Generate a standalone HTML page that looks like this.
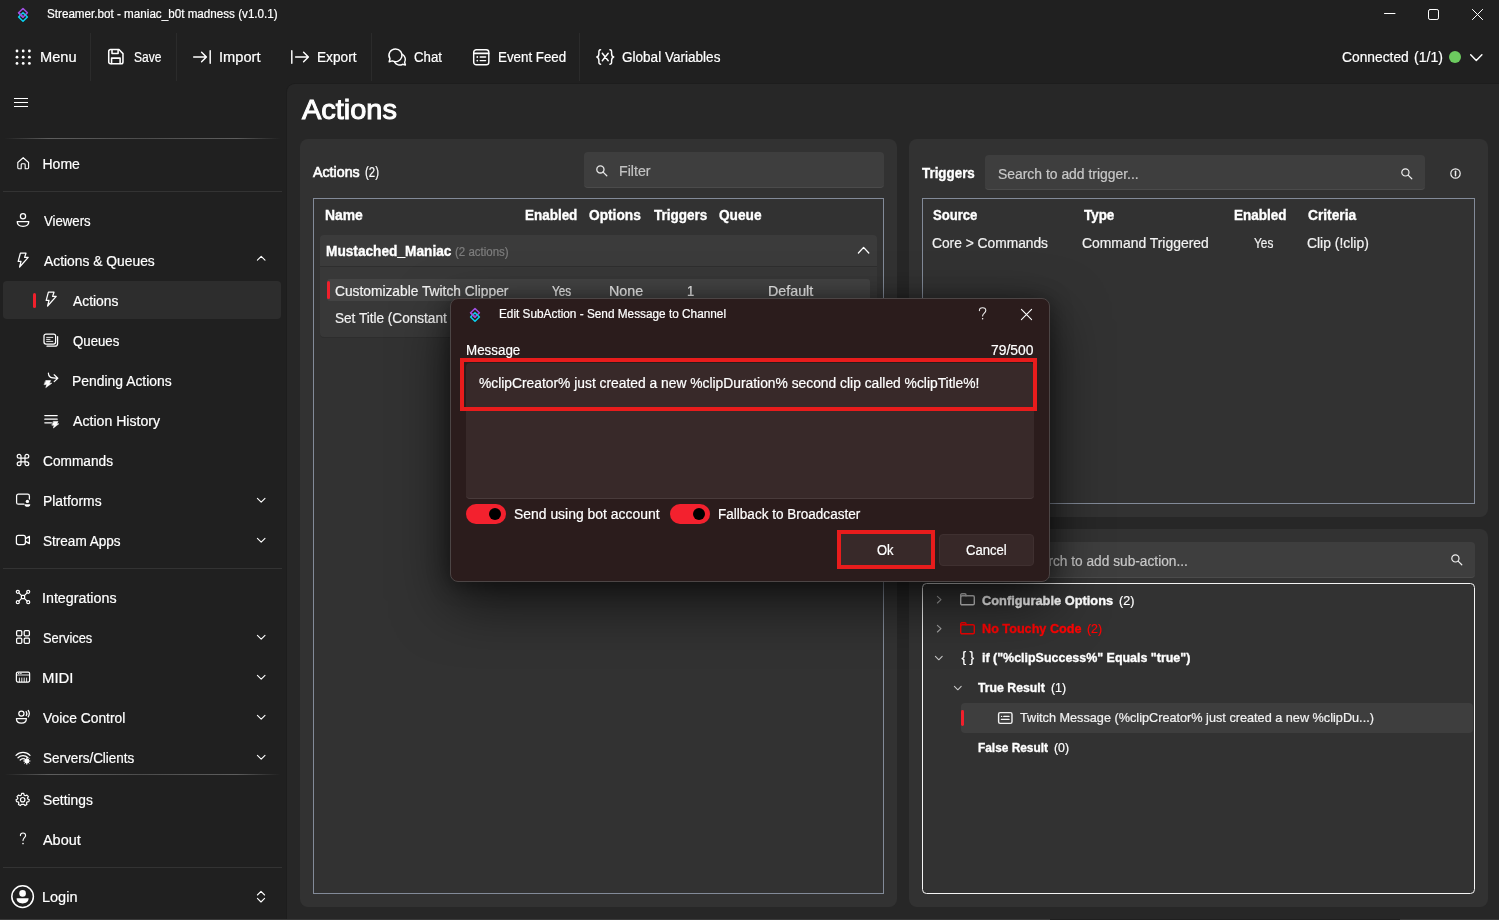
<!DOCTYPE html>
<html lang="en"><head><meta charset="utf-8"><title>Streamer.bot - Actions</title>
<style>
html,body{margin:0;padding:0;}
body{width:1499px;height:920px;overflow:hidden;background:#202020;position:relative;font-family:"Liberation Sans", sans-serif;}
#app{position:absolute;left:0;top:0;width:1499px;height:920px;will-change:transform;}
.b{position:absolute;box-sizing:border-box;}
.t{position:absolute;white-space:pre;font-family:"Liberation Sans", sans-serif;transform-origin:0 0;}
.i{position:absolute;overflow:visible;}
</style></head>
<body>
<div id="app">
<div class="b" style="left:287px;top:83.7px;width:1212px;height:835.3px;background:#272727;border-radius:8px 0 0 0;box-shadow:0 0 0 1px #1d1d1d;"></div>
<div class="b" style="left:0px;top:919px;width:1050px;height:1px;background:#3a3a3a;"></div>
<div class="b" style="left:1050px;top:919px;width:350px;height:1px;background:#1f1f1f;"></div>
<div class="b" style="left:1400px;top:919px;width:99px;height:1px;background:#3a3a3a;"></div>
<svg class="i" style="left:15px;top:7px;" width="16" height="16" viewBox="0 0 16 16" fill="none" stroke="#fff" stroke-width="1.5" stroke-linecap="round" stroke-linejoin="round"><path d="M8 1.5 L12.4 5.8 L8 10.1 L3.6 5.8 Z" stroke="#9d4fdc" stroke-width="1.55"/><path d="M8 5.8 L12.4 10 L8 14.3 L3.6 10 Z" stroke="#0ad0ee" stroke-width="1.55"/><path d="M3.6 5.8 L8 10.1" stroke="#9d4fdc" stroke-width="1.55"/></svg>
<span class="t" style="left:47.0px;top:4.14px;font-size:12px;line-height:20px;color:#fff;transform:scaleX(0.9716);-webkit-text-stroke:0.2px #fff;">Streamer.bot - maniac_b0t madness (v1.0.1)</span>
<svg class="i" style="left:1384px;top:8px;" width="12" height="12" viewBox="0 0 12 12" fill="none" stroke="#fff" stroke-width="1" stroke-linecap="round" stroke-linejoin="round"><path d="M0.5 5.5 H11"/></svg>
<svg class="i" style="left:1428px;top:9px;" width="11" height="11" viewBox="0 0 11 11" fill="none" stroke="#fff" stroke-width="1" stroke-linecap="round" stroke-linejoin="round"><rect x="0.5" y="0.5" width="10" height="10" rx="1.6"/></svg>
<svg class="i" style="left:1472px;top:9px;" width="11" height="11" viewBox="0 0 11 11" fill="none" stroke="#fff" stroke-width="1" stroke-linecap="round" stroke-linejoin="round"><path d="M0.4 0.4 L10.6 10.6 M10.6 0.4 L0.4 10.6"/></svg>
<div class="b" style="left:90px;top:33px;width:1px;height:48px;background:#2b2b2b;"></div>
<div class="b" style="left:176.3px;top:33px;width:1.0px;height:48px;background:#2b2b2b;"></div>
<div class="b" style="left:371px;top:33px;width:1px;height:48px;background:#2b2b2b;"></div>
<div class="b" style="left:579px;top:33px;width:1px;height:48px;background:#2b2b2b;"></div>
<svg class="i" style="left:14.6px;top:48.8px;" width="16.4" height="16.4" viewBox="0 0 16.4 16.4" fill="none" stroke="#fff" stroke-width="1.1" stroke-linecap="round" stroke-linejoin="round"><circle cx="2.0" cy="2.0" r="1.4" fill="#fff" stroke="none"/><circle cx="2.0" cy="8.2" r="1.4" fill="#fff" stroke="none"/><circle cx="2.0" cy="14.4" r="1.4" fill="#fff" stroke="none"/><circle cx="8.2" cy="2.0" r="1.4" fill="#fff" stroke="none"/><circle cx="8.2" cy="8.2" r="1.4" fill="#fff" stroke="none"/><circle cx="8.2" cy="14.4" r="1.4" fill="#fff" stroke="none"/><circle cx="14.4" cy="2.0" r="1.4" fill="#fff" stroke="none"/><circle cx="14.4" cy="8.2" r="1.4" fill="#fff" stroke="none"/><circle cx="14.4" cy="14.4" r="1.4" fill="#fff" stroke="none"/></svg>
<span class="t" style="left:39.56px;top:47.35px;font-size:14px;line-height:20px;color:#fff;transform:scaleX(1.0441);-webkit-text-stroke:0.2px #fff;">Menu</span>
<svg class="i" style="left:107.2px;top:48.3px;" width="17.7" height="17.4" viewBox="0 0 16.5 16.5" fill="none" stroke="#fff" stroke-width="1.45" stroke-linecap="round" stroke-linejoin="round"><path d="M3.2 1.5 H11.2 L15 5.3 V13.3 A1.7 1.7 0 0 1 13.3 15 H3.2 A1.7 1.7 0 0 1 1.5 13.3 V3.2 A1.7 1.7 0 0 1 3.2 1.5 Z"/><path d="M4.6 1.7 V5.2 H10.4 V1.7"/><path d="M4.2 14.8 V9.6 H12.3 V14.8"/></svg>
<span class="t" style="left:133.6px;top:47.35px;font-size:14px;line-height:20px;color:#fff;transform:scaleX(0.8592);-webkit-text-stroke:0.2px #fff;">Save</span>
<svg class="i" style="left:193px;top:50px;" width="18" height="14" viewBox="0 0 18 14" fill="none" stroke="#fff" stroke-width="1.45" stroke-linecap="round" stroke-linejoin="round"><path d="M0.7 7 H13.2 M8.6 2.2 L13.4 7 L8.6 11.8 M17.2 0.7 V13.3"/></svg>
<span class="t" style="left:219.25px;top:47.35px;font-size:14px;line-height:20px;color:#fff;transform:scaleX(1.0468);-webkit-text-stroke:0.2px #fff;">Import</span>
<svg class="i" style="left:290.5px;top:50px;" width="18" height="14" viewBox="0 0 18 14" fill="none" stroke="#fff" stroke-width="1.45" stroke-linecap="round" stroke-linejoin="round"><path d="M0.8 0.7 V13.3 M4.6 7 H17.2 M12.6 2.2 L17.4 7 L12.6 11.8"/></svg>
<span class="t" style="left:317.22px;top:47.35px;font-size:14px;line-height:20px;color:#fff;transform:scaleX(0.9754);-webkit-text-stroke:0.2px #fff;">Export</span>
<svg class="i" style="left:387.5px;top:48px;" width="19" height="18" viewBox="0 0 19 18" fill="none" stroke="#fff" stroke-width="1.45" stroke-linecap="round" stroke-linejoin="round"><path d="M7.6 1 A6.6 6.3 0 1 1 4.4 12.9 L1.2 13.7 L2 10.7 A6.6 6.3 0 0 1 7.6 1 Z"/><path d="M14.7 6.6 A5.8 5.8 0 0 1 16.6 14.3 L17.4 17 L14.6 16.3 A5.9 5.9 0 0 1 6.6 14.2"/></svg>
<span class="t" style="left:413.9px;top:47.35px;font-size:14px;line-height:20px;color:#fff;transform:scaleX(0.9467);-webkit-text-stroke:0.2px #fff;">Chat</span>
<svg class="i" style="left:473px;top:48.8px;" width="16.5" height="16.5" viewBox="0 0 16.5 16.5" fill="none" stroke="#fff" stroke-width="1.45" stroke-linecap="round" stroke-linejoin="round"><rect x="0.7" y="0.7" width="15.1" height="15.1" rx="2.6"/><path d="M0.9 4.4 H15.6" stroke-width="1.8"/><path d="M7.2 8 H12.6 M7.2 11.6 H12.6" /><circle cx="4.3" cy="8" r="0.9" fill="#fff" stroke="none"/><circle cx="4.3" cy="11.6" r="0.9" fill="#fff" stroke="none"/></svg>
<span class="t" style="left:497.55px;top:47.35px;font-size:14px;line-height:20px;color:#fff;transform:scaleX(0.9525);-webkit-text-stroke:0.2px #fff;">Event Feed</span>
<svg class="i" style="left:595.5px;top:49px;" width="18.5" height="16" viewBox="0 0 18.5 16" fill="none" stroke="#fff" stroke-width="1.45" stroke-linecap="round" stroke-linejoin="round"><path d="M4.6 0.8 C2.6 0.8 2.9 2.6 2.9 4.4 C2.9 6.6 2.4 7.6 0.8 8 C2.4 8.4 2.9 9.4 2.9 11.6 C2.9 13.4 2.6 15.2 4.6 15.2"/><path d="M13.9 0.8 C15.9 0.8 15.6 2.6 15.6 4.4 C15.6 6.6 16.1 7.6 17.7 8 C16.1 8.4 15.6 9.4 15.6 11.6 C15.6 13.4 15.9 15.2 13.9 15.2"/><path d="M6.3 4.2 L12.2 11.8 M12.2 4.2 L6.3 11.8"/></svg>
<span class="t" style="left:622.2px;top:47.35px;font-size:14px;line-height:20px;color:#fff;transform:scaleX(0.9677);-webkit-text-stroke:0.2px #fff;">Global Variables</span>
<span class="t" style="left:1342.2px;top:46.85px;font-size:14px;line-height:20px;color:#fff;transform:scaleX(0.9861);-webkit-text-stroke:0.2px #fff;">Connected</span>
<span class="t" style="left:1414.4px;top:46.85px;font-size:14px;line-height:20px;color:#fff;transform:scaleX(1.0063);-webkit-text-stroke:0.2px #fff;">(1/1)</span>
<div class="b" style="left:1449px;top:51px;width:12px;height:12px;background:#6ccb5f;border-radius:6px;"></div>
<svg class="i" style="left:1470px;top:53.5px;" width="12.6" height="8" viewBox="0 0 12.6 8" fill="none" stroke="#fff" stroke-width="1.45" stroke-linecap="round" stroke-linejoin="round"><path d="M0.7 0.8 L6.3 6.6 L11.9 0.8"/></svg>
<svg class="i" style="left:14px;top:98px;shape-rendering:crispEdges;" width="14" height="9" viewBox="0 0 14 9" fill="none" stroke="#fff" stroke-width="1" stroke-linecap="round" stroke-linejoin="round"><path d="M0 0.5 H14 M0 4.5 H14 M0 8.5 H14"/></svg>
<div class="b" style="left:4px;top:138px;width:277px;height:1px;background:linear-gradient(90deg, rgba(96,96,96,0), #5e5e5e 16%, #4c4c4c 50%, #5e5e5e 84%, rgba(96,96,96,0));"></div>
<div class="b" style="left:3px;top:191px;width:279px;height:1px;background:#333333;"></div>
<div class="b" style="left:3px;top:568px;width:279px;height:1px;background:#333333;"></div>
<div class="b" style="left:4px;top:774px;width:277px;height:1px;background:linear-gradient(90deg, rgba(96,96,96,0), #5e5e5e 16%, #4c4c4c 50%, #5e5e5e 84%, rgba(96,96,96,0));"></div>
<div class="b" style="left:3px;top:867px;width:279px;height:1px;background:#333333;"></div>
<div class="b" style="left:3px;top:281px;width:278px;height:38px;background:#2d2d2d;border-radius:4px;"></div>
<div class="b" style="left:33px;top:292.5px;width:3px;height:15.5px;background:#f0202c;border-radius:1.5px;"></div>
<span class="t" style="left:42.5px;top:153.85px;font-size:14px;line-height:20px;color:#fff;-webkit-text-stroke:0.2px #fff;">Home</span>
<span class="t" style="left:43.5px;top:211.45px;font-size:14px;line-height:20px;color:#fff;transform:scaleX(0.9427);-webkit-text-stroke:0.2px #fff;">Viewers</span>
<span class="t" style="left:43.5px;top:251.15px;font-size:14px;line-height:20px;color:#fff;transform:scaleX(0.9887);-webkit-text-stroke:0.2px #fff;">Actions &amp; Queues</span>
<span class="t" style="left:73.3px;top:291.15px;font-size:14px;line-height:20px;color:#fff;transform:scaleX(0.9889);-webkit-text-stroke:0.2px #fff;">Actions</span>
<span class="t" style="left:73.3px;top:331.15px;font-size:14px;line-height:20px;color:#fff;transform:scaleX(0.9442);-webkit-text-stroke:0.2px #fff;">Queues</span>
<span class="t" style="left:72.31px;top:371.15px;font-size:14px;line-height:20px;color:#fff;transform:scaleX(0.9932);-webkit-text-stroke:0.2px #fff;">Pending Actions</span>
<span class="t" style="left:73.3px;top:411.15px;font-size:14px;line-height:20px;color:#fff;transform:scaleX(1.0086);-webkit-text-stroke:0.2px #fff;">Action History</span>
<span class="t" style="left:43.0px;top:451.15px;font-size:14px;line-height:20px;color:#fff;transform:scaleX(0.9779);-webkit-text-stroke:0.2px #fff;">Commands</span>
<span class="t" style="left:42.51px;top:491.15px;font-size:14px;line-height:20px;color:#fff;transform:scaleX(0.991);-webkit-text-stroke:0.2px #fff;">Platforms</span>
<span class="t" style="left:42.7px;top:531.15px;font-size:14px;line-height:20px;color:#fff;transform:scaleX(0.9688);-webkit-text-stroke:0.2px #fff;">Stream Apps</span>
<span class="t" style="left:42.48px;top:588.45px;font-size:14px;line-height:20px;color:#fff;transform:scaleX(1.0186);-webkit-text-stroke:0.2px #fff;">Integrations</span>
<span class="t" style="left:42.7px;top:628.15px;font-size:14px;line-height:20px;color:#fff;transform:scaleX(0.9184);-webkit-text-stroke:0.2px #fff;">Services</span>
<span class="t" style="left:42.14px;top:668.35px;font-size:14px;line-height:20px;color:#fff;transform:scaleX(1.0628);-webkit-text-stroke:0.2px #fff;">MIDI</span>
<span class="t" style="left:43.2px;top:708.15px;font-size:14px;line-height:20px;color:#fff;transform:scaleX(0.9885);-webkit-text-stroke:0.2px #fff;">Voice Control</span>
<span class="t" style="left:42.6px;top:748.25px;font-size:14px;line-height:20px;color:#fff;transform:scaleX(0.9619);-webkit-text-stroke:0.2px #fff;">Servers/Clients</span>
<span class="t" style="left:42.6px;top:789.75px;font-size:14px;line-height:20px;color:#fff;transform:scaleX(0.9845);-webkit-text-stroke:0.2px #fff;">Settings</span>
<span class="t" style="left:43.2px;top:830.15px;font-size:14px;line-height:20px;color:#fff;transform:scaleX(1.0301);-webkit-text-stroke:0.2px #fff;">About</span>
<span class="t" style="left:42.17px;top:886.65px;font-size:14px;line-height:20px;color:#fff;transform:scaleX(1.0348);-webkit-text-stroke:0.2px #fff;">Login</span>
<svg class="i" style="left:15.8px;top:155.6px;" width="14.4" height="14.4" viewBox="0 0 16 16" fill="none" stroke="#fff" stroke-width="1.25" stroke-linecap="round" stroke-linejoin="round"><path d="M2 7.2 L8 1.9 L14 7.2 V13.2 A1 1 0 0 1 13 14.2 H10.2 V9.6 A1 1 0 0 0 9.2 8.6 H6.8 A1 1 0 0 0 5.8 9.6 V14.2 H3 A1 1 0 0 1 2 13.2 Z"/></svg>
<svg class="i" style="left:15.0px;top:211.9px;" width="16" height="16" viewBox="0 0 16 16" fill="none" stroke="#fff" stroke-width="1.25" stroke-linecap="round" stroke-linejoin="round"><circle cx="8" cy="4.2" r="2.6"/><path d="M2.2 9.6 H13.8 C13.8 12.6 11.4 14.4 8 14.4 C4.6 14.4 2.2 12.6 2.2 9.6 Z"/></svg>
<svg class="i" style="left:15.0px;top:251.60000000000002px;" width="16" height="16" viewBox="0 0 16 16" fill="none" stroke="#fff" stroke-width="1.25" stroke-linecap="round" stroke-linejoin="round"><path d="M5.4 1.2 H11 L9.6 5.4 H13.2 L4.6 15 L6 9.4 H3.2 Z"/></svg>
<svg class="i" style="left:42.5px;top:291.3px;" width="16" height="16" viewBox="0 0 16 16" fill="none" stroke="#fff" stroke-width="1.25" stroke-linecap="round" stroke-linejoin="round"><path d="M5.4 1.2 H11 L9.6 5.4 H13.2 L4.6 15 L6 9.4 H3.2 Z"/></svg>
<svg class="i" style="left:42.5px;top:331.6px;" width="16" height="16" viewBox="0 0 16 16" fill="none" stroke="#fff" stroke-width="1.25" stroke-linecap="round" stroke-linejoin="round"><rect x="1" y="2" width="11.6" height="10" rx="2"/><path d="M14.6 4.6 V11.4 A2.8 2.8 0 0 1 11.8 14.2 H4"/><path d="M3.6 5.4 H9.8 M3.6 7.4 H7 M3.6 9.4 H9.8" stroke-width="0.9"/></svg>
<svg class="i" style="left:42.5px;top:371.6px;" width="16" height="16" viewBox="0 0 16 16" fill="none" stroke="#fff" stroke-width="1.25" stroke-linecap="round" stroke-linejoin="round"><path d="M5.4 1.2 C5.4 5 7.4 6.2 14.6 6.2 M11.2 2.8 L14.8 6.2 L11.2 9.6"/><path d="M3 8.6 H7.6 L6.4 11.2 H8.8 L2.8 15.6 L3.8 12.6 H1.4 Z" fill="#fff" stroke-width="0.6"/></svg>
<svg class="i" style="left:42.5px;top:411.6px;" width="16" height="16" viewBox="0 0 16 16" fill="none" stroke="#fff" stroke-width="1.25" stroke-linecap="round" stroke-linejoin="round"><path d="M1.8 3.6 H14.2 M1.8 7.2 H14.2 M1.8 10.8 H8.4"/><path d="M10.6 9.4 H15 L13.8 11.8 H15.8 L10.4 16 L11.2 13.2 H9.2 Z" fill="#fff" stroke-width="0.6"/></svg>
<svg class="i" style="left:15.0px;top:451.6px;" width="16" height="16" viewBox="0 0 16 16" fill="none" stroke="#fff" stroke-width="1.2" stroke-linecap="round" stroke-linejoin="round"><path d="M6 6 V4.2 A1.9 1.9 0 1 0 4.1 6.1 H11.9 A1.9 1.9 0 1 0 10 4.2 V11.8 A1.9 1.9 0 1 0 11.9 9.9 H4.1 A1.9 1.9 0 1 0 6 11.8 Z"/></svg>
<svg class="i" style="left:15.0px;top:491.6px;" width="16" height="16" viewBox="0 0 16 16" fill="none" stroke="#fff" stroke-width="1.25" stroke-linecap="round" stroke-linejoin="round"><path d="M9 12.2 H3.4 A1.8 1.8 0 0 1 1.6 10.4 V4 A1.8 1.8 0 0 1 3.4 2.2 H12.6 A1.8 1.8 0 0 1 14.4 4 V7"/><circle cx="12.4" cy="9.4" r="1.7" fill="#fff" stroke="none"/><path d="M9.6 12.2 H15.2 V12.8 C15.2 14.2 14 14.8 12.4 14.8 C10.8 14.8 9.6 14.2 9.6 12.8 Z" fill="#fff" stroke="none"/></svg>
<svg class="i" style="left:15.0px;top:531.6px;" width="16" height="16" viewBox="0 0 16 16" fill="none" stroke="#fff" stroke-width="1.25" stroke-linecap="round" stroke-linejoin="round"><rect x="1.4" y="3.4" width="9" height="9.2" rx="2"/><path d="M10.6 6.6 L14.4 4.4 V11.6 L10.6 9.4"/></svg>
<svg class="i" style="left:15.0px;top:588.6px;" width="16" height="16" viewBox="0 0 16 16" fill="none" stroke="#fff" stroke-width="1.25" stroke-linecap="round" stroke-linejoin="round"><rect x="6.4" y="6.4" width="3.2" height="3.2" rx="0.6"/><circle cx="2.8" cy="2.8" r="1.5"/><circle cx="13.2" cy="2.8" r="1.5"/><circle cx="2.8" cy="13.2" r="1.5"/><circle cx="13.2" cy="13.2" r="1.5"/><path d="M3.9 3.9 L6.4 6.4 M12.1 3.9 L9.6 6.4 M3.9 12.1 L6.4 9.6 M12.1 12.1 L9.6 9.6"/></svg>
<svg class="i" style="left:15.0px;top:628.6px;" width="16" height="16" viewBox="0 0 16 16" fill="none" stroke="#fff" stroke-width="1.25" stroke-linecap="round" stroke-linejoin="round"><rect x="1.6" y="1.6" width="5.2" height="5.2" rx="1.1"/><rect x="9.2" y="1.6" width="5.2" height="5.2" rx="1.1"/><rect x="1.6" y="9.2" width="5.2" height="5.2" rx="1.1"/><rect x="9.2" y="9.2" width="5.2" height="5.2" rx="1.1"/></svg>
<svg class="i" style="left:15.0px;top:668.6px;" width="16" height="16" viewBox="0 0 16 16" fill="none" stroke="#fff" stroke-width="1.25" stroke-linecap="round" stroke-linejoin="round"><rect x="1.4" y="3" width="13.2" height="10" rx="1.4"/><path d="M1.6 6 H14.4 M4.4 9 V12.8 M6.8 9 V12.8 M9.2 9 V12.8 M11.6 9 V12.8" stroke-width="0.9"/><path d="M3.4 4.5 H4 M5.6 4.5 H6.2" stroke-width="0.9"/></svg>
<svg class="i" style="left:15.0px;top:708.6px;" width="16" height="16" viewBox="0 0 16 16" fill="none" stroke="#fff" stroke-width="1.25" stroke-linecap="round" stroke-linejoin="round"><circle cx="6.4" cy="4.6" r="2.6"/><path d="M1.4 9.6 H11.4 C11.4 12.4 9.4 14.2 6.4 14.2 C3.4 14.2 1.4 12.4 1.4 9.6 Z"/><path d="M11.2 2.6 C12 3.8 12 5.4 11.2 6.6 M13.2 1.4 C14.6 3.4 14.6 5.8 13.2 7.8"/></svg>
<svg class="i" style="left:15.0px;top:748.6px;" width="16" height="16" viewBox="0 0 16 16" fill="none" stroke="#fff" stroke-width="1.25" stroke-linecap="round" stroke-linejoin="round"><path d="M1 6.4 C4.8 2.4 11.2 2.4 15 6.4 M3 8.8 C5.8 5.8 10.2 5.8 13 8.8 M5.2 11 C6.6 9.6 8.4 9.4 9.6 10"/><circle cx="11.8" cy="12" r="2.4" fill="#fff" stroke="none"/><path d="M11.8 8.8 V15.2 M8.6 12 H15 M9.6 9.8 L14 14.2 M14 9.8 L9.6 14.2" stroke-width="1"/></svg>
<svg class="i" style="left:15.3px;top:791.6px;" width="15.4" height="15.4" viewBox="0 0 16 16" fill="none" stroke="#fff" stroke-width="1.25" stroke-linecap="round" stroke-linejoin="round"><circle cx="8" cy="8" r="2.3"/><path d="M6.9 1.5 H9.1 L9.5 3.3 L10.7 3.9 L12.4 3.2 L13.9 4.8 L13 6.3 L13.3 7.2 L14.9 8 L14.4 10.1 L12.7 10.3 L12 11.3 L12.4 13 L10.5 14.1 L9.2 12.9 H6.8 L5.5 14.1 L3.6 13 L4 11.3 L3.3 10.3 L1.6 10.1 L1.1 8 L2.7 7.2 L3 6.3 L2.1 4.8 L3.6 3.2 L5.3 3.9 L6.5 3.3 Z"/></svg>
<svg class="i" style="left:15.0px;top:830.6px;" width="16" height="16" viewBox="0 0 16 16" fill="none" stroke="#fff" stroke-width="1.1" stroke-linecap="round" stroke-linejoin="round"><path d="M5.4 4.6 C5.4 2.8 6.6 2 8 2 C9.5 2 10.6 2.9 10.6 4.4 C10.6 6.6 8 6.8 8 9.6"/><circle cx="8" cy="12.6" r="0.8" fill="#fff" stroke="none"/></svg>
<svg class="i" style="left:11.3px;top:884.5px;" width="23.2" height="23.2" viewBox="0 0 23.2 23.2" fill="none" stroke="#fff" stroke-width="1.1" stroke-linecap="round" stroke-linejoin="round"><circle cx="11.6" cy="11.6" r="10.8" stroke-width="1.5"/><circle cx="11.6" cy="8.4" r="3.3" fill="#fff" stroke="none"/><path d="M5.6 13.2 H17.6 C17.6 16.6 15 18.4 11.6 18.4 C8.2 18.4 5.6 16.6 5.6 13.2 Z" fill="#fff" stroke="none"/></svg>
<svg class="i" style="left:256.8px;top:256.09999999999997px;" width="8.4" height="4.6" viewBox="0 0 8.4 4.6" fill="none" stroke="#fff" stroke-width="1.1" stroke-linecap="round" stroke-linejoin="round"><path d="M0.4 4.199999999999999 L4.2 0.4 L8.0 4.199999999999999"/></svg>
<svg class="i" style="left:256.8px;top:497.7px;" width="8.4" height="4.6" viewBox="0 0 8.4 4.6" fill="none" stroke="#fff" stroke-width="1.1" stroke-linecap="round" stroke-linejoin="round"><path d="M0.4 0.4 L4.2 4.199999999999999 L8.0 0.4"/></svg>
<svg class="i" style="left:256.8px;top:537.7px;" width="8.4" height="4.6" viewBox="0 0 8.4 4.6" fill="none" stroke="#fff" stroke-width="1.1" stroke-linecap="round" stroke-linejoin="round"><path d="M0.4 0.4 L4.2 4.199999999999999 L8.0 0.4"/></svg>
<svg class="i" style="left:256.8px;top:634.7px;" width="8.4" height="4.6" viewBox="0 0 8.4 4.6" fill="none" stroke="#fff" stroke-width="1.1" stroke-linecap="round" stroke-linejoin="round"><path d="M0.4 0.4 L4.2 4.199999999999999 L8.0 0.4"/></svg>
<svg class="i" style="left:256.8px;top:674.7px;" width="8.4" height="4.6" viewBox="0 0 8.4 4.6" fill="none" stroke="#fff" stroke-width="1.1" stroke-linecap="round" stroke-linejoin="round"><path d="M0.4 0.4 L4.2 4.199999999999999 L8.0 0.4"/></svg>
<svg class="i" style="left:256.8px;top:714.7px;" width="8.4" height="4.6" viewBox="0 0 8.4 4.6" fill="none" stroke="#fff" stroke-width="1.1" stroke-linecap="round" stroke-linejoin="round"><path d="M0.4 0.4 L4.2 4.199999999999999 L8.0 0.4"/></svg>
<svg class="i" style="left:256.8px;top:754.7px;" width="8.4" height="4.6" viewBox="0 0 8.4 4.6" fill="none" stroke="#fff" stroke-width="1.1" stroke-linecap="round" stroke-linejoin="round"><path d="M0.4 0.4 L4.2 4.199999999999999 L8.0 0.4"/></svg>
<svg class="i" style="left:257.0px;top:891.0px;" width="8" height="4.4" viewBox="0 0 8 4.4" fill="none" stroke="#fff" stroke-width="1.1" stroke-linecap="round" stroke-linejoin="round"><path d="M0.4 4.0 L4.0 0.4 L7.6 4.0"/></svg>
<svg class="i" style="left:257.0px;top:898.4px;" width="8" height="4.4" viewBox="0 0 8 4.4" fill="none" stroke="#fff" stroke-width="1.1" stroke-linecap="round" stroke-linejoin="round"><path d="M0.4 0.4 L4.0 4.0 L7.6 0.4"/></svg>
<span class="t" style="left:302.4px;top:92.3px;font-size:28px;line-height:36px;color:#fff;transform:scaleX(1.0339);-webkit-text-stroke:1.0px #fff;">Actions</span>
<div class="b" style="left:300px;top:139px;width:597px;height:768px;background:#323232;border-radius:8px;"></div>
<span class="t" style="left:313.3px;top:162.35px;font-size:14px;line-height:20px;color:#fff;transform:scaleX(1.0172);-webkit-text-stroke:0.6px #fff;">Actions</span>
<span class="t" style="left:365.4px;top:162.35px;font-size:14px;line-height:20px;color:#fff;transform:scaleX(0.8208);-webkit-text-stroke:0.2px #fff;">(2)</span>
<div class="b" style="left:584px;top:152px;width:300.3px;height:36px;background:#3e3e3e;border-radius:4px;border-bottom:1px solid #4b4b4b;"></div>
<svg class="i" style="left:596px;top:165px;" width="11.6" height="11.6" viewBox="0 0 11.6 11.6" fill="none" stroke="#e6e6e6" stroke-width="1.3" stroke-linecap="round" stroke-linejoin="round"><circle cx="4.4" cy="4.4" r="3.6"/><path d="M7.1 7.1 L10.8 10.8"/></svg>
<span class="t" style="left:618.99px;top:161.15px;font-size:14px;line-height:20px;color:#c2c2c2;transform:scaleX(1.0116);-webkit-text-stroke:0.2px #c2c2c2;">Filter</span>
<div class="b" style="left:313.2px;top:198px;width:571.0px;height:696px;border:1px solid #828a98;"></div>
<span class="t" style="left:324.6px;top:205.25px;font-size:14px;line-height:20px;color:#fff;font-weight:700;transform:scaleX(0.991);-webkit-text-stroke:0.35px #fff;">Name</span>
<span class="t" style="left:524.5px;top:205.25px;font-size:14px;line-height:20px;color:#fff;font-weight:700;transform:scaleX(0.961);-webkit-text-stroke:0.35px #fff;">Enabled</span>
<span class="t" style="left:588.9px;top:205.25px;font-size:14px;line-height:20px;color:#fff;font-weight:700;transform:scaleX(0.9793);-webkit-text-stroke:0.35px #fff;">Options</span>
<span class="t" style="left:654.2px;top:205.25px;font-size:14px;line-height:20px;color:#fff;font-weight:700;transform:scaleX(0.9629);-webkit-text-stroke:0.35px #fff;">Triggers</span>
<span class="t" style="left:718.8px;top:205.25px;font-size:14px;line-height:20px;color:#fff;font-weight:700;transform:scaleX(0.9753);-webkit-text-stroke:0.35px #fff;">Queue</span>
<div class="b" style="left:320px;top:235px;width:557px;height:31px;background:#3b3b3b;border-radius:4px 4px 0 0;"></div>
<div class="b" style="left:320px;top:266px;width:557px;height:1px;background:#2e2e2e;"></div>
<div class="b" style="left:320px;top:267px;width:557px;height:70px;background:#383838;border-radius:0 0 4px 4px;box-shadow:0 1px 0 #2d2d2d;"></div>
<span class="t" style="left:326.1px;top:241.05px;font-size:14px;line-height:20px;color:#fff;font-weight:700;transform:scaleX(0.9768);-webkit-text-stroke:0.35px #fff;">Mustached_Maniac</span>
<span class="t" style="left:455.2px;top:241.54px;font-size:12px;line-height:20px;color:#7e7e7e;transform:scaleX(0.9585);-webkit-text-stroke:0.2px #7e7e7e;">(2 actions)</span>
<svg class="i" style="left:857.6px;top:247.20000000000002px;" width="11.2" height="6.4" viewBox="0 0 11.2 6.4" fill="none" stroke="#fff" stroke-width="1.3" stroke-linecap="round" stroke-linejoin="round"><path d="M0.4 6.0 L5.6 0.4 L10.799999999999999 6.0"/></svg>
<div class="b" style="left:327px;top:279.4px;width:543.4px;height:21.6px;background:#444444;border-radius:3px;"></div>
<div class="b" style="left:327px;top:281.2px;width:3px;height:17.6px;background:#f0202c;border-radius:1.5px;"></div>
<span class="t" style="left:335.2px;top:281.15px;font-size:14px;line-height:20px;color:#f2f2f2;transform:scaleX(0.9833);-webkit-text-stroke:0.2px #f2f2f2;">Customizable Twitch Clipper</span>
<span class="t" style="left:552.0px;top:281.15px;font-size:14px;line-height:20px;color:#f2f2f2;transform:scaleX(0.8407);-webkit-text-stroke:0.2px #f2f2f2;">Yes</span>
<span class="t" style="left:608.98px;top:281.15px;font-size:14px;line-height:20px;color:#f2f2f2;transform:scaleX(1.0189);-webkit-text-stroke:0.2px #f2f2f2;">None</span>
<span class="t" style="left:687.27px;top:281.15px;font-size:14px;line-height:20px;color:#f2f2f2;transform:scaleX(0.93);-webkit-text-stroke:0.2px #f2f2f2;">1</span>
<span class="t" style="left:768.48px;top:281.15px;font-size:14px;line-height:20px;color:#f2f2f2;transform:scaleX(1.0191);-webkit-text-stroke:0.2px #f2f2f2;">Default</span>
<span class="t" style="left:335.2px;top:308.15px;font-size:14px;line-height:20px;color:#f2f2f2;transform:scaleX(0.9703);-webkit-text-stroke:0.2px #f2f2f2;">Set Title (Constant</span>
<div class="b" style="left:909px;top:139px;width:579px;height:378px;background:#323232;border-radius:8px;"></div>
<span class="t" style="left:922.4px;top:163.15px;font-size:14px;line-height:20px;color:#fff;font-weight:700;transform:scaleX(0.9557);-webkit-text-stroke:0.35px #fff;">Triggers</span>
<div class="b" style="left:985px;top:155px;width:440px;height:34.8px;background:#3e3e3e;border-radius:4px;border-bottom:1px solid #4b4b4b;"></div>
<span class="t" style="left:997.6px;top:163.85px;font-size:14px;line-height:20px;color:#c8c8c8;transform:scaleX(0.9932);-webkit-text-stroke:0.2px #c8c8c8;">Search to add trigger...</span>
<svg class="i" style="left:1401.4px;top:167.6px;" width="11.6" height="11.6" viewBox="0 0 11.6 11.6" fill="none" stroke="#f0f0f0" stroke-width="1.2" stroke-linecap="round" stroke-linejoin="round"><circle cx="4.4" cy="4.4" r="3.6"/><path d="M7.1 7.1 L10.8 10.8"/></svg>
<svg class="i" style="left:1449.6px;top:167.7px;" width="11" height="11" viewBox="0 0 11 11" fill="none" stroke="#f0f0f0" stroke-width="1.2" stroke-linecap="round" stroke-linejoin="round"><circle cx="5.5" cy="5.5" r="4.7"/><path d="M5.5 3.2 V7.8" stroke-width="1.5"/></svg>
<div class="b" style="left:922px;top:198px;width:553.4px;height:306px;border:1px solid #828a98;"></div>
<span class="t" style="left:932.7px;top:204.95px;font-size:14px;line-height:20px;color:#fff;font-weight:700;transform:scaleX(0.9355);-webkit-text-stroke:0.35px #fff;">Source</span>
<span class="t" style="left:1083.6px;top:204.95px;font-size:14px;line-height:20px;color:#fff;font-weight:700;transform:scaleX(0.9576);-webkit-text-stroke:0.35px #fff;">Type</span>
<span class="t" style="left:1233.5px;top:204.95px;font-size:14px;line-height:20px;color:#fff;font-weight:700;transform:scaleX(0.9628);-webkit-text-stroke:0.35px #fff;">Enabled</span>
<span class="t" style="left:1307.7px;top:204.95px;font-size:14px;line-height:20px;color:#fff;font-weight:700;transform:scaleX(0.981);-webkit-text-stroke:0.35px #fff;">Criteria</span>
<span class="t" style="left:932.0px;top:232.65px;font-size:14px;line-height:20px;color:#f2f2f2;transform:scaleX(0.9841);-webkit-text-stroke:0.2px #f2f2f2;">Core &gt; Commands</span>
<span class="t" style="left:1081.9px;top:232.65px;font-size:14px;line-height:20px;color:#f2f2f2;transform:scaleX(0.9931);-webkit-text-stroke:0.2px #f2f2f2;">Command Triggered</span>
<span class="t" style="left:1253.9px;top:232.65px;font-size:14px;line-height:20px;color:#f2f2f2;transform:scaleX(0.8451);-webkit-text-stroke:0.2px #f2f2f2;">Yes</span>
<span class="t" style="left:1307.1px;top:232.65px;font-size:14px;line-height:20px;color:#f2f2f2;transform:scaleX(0.9924);-webkit-text-stroke:0.2px #f2f2f2;">Clip (!clip)</span>
<div class="b" style="left:909px;top:529px;width:579px;height:378px;background:#323232;border-radius:8px;"></div>
<span class="t" style="left:922.4px;top:550.65px;font-size:14px;line-height:20px;color:#fff;font-weight:700;transform:scaleX(0.9558);-webkit-text-stroke:0.35px #fff;">Sub-Actions</span>
<div class="b" style="left:1012px;top:542.4px;width:463px;height:35.6px;background:#3e3e3e;border-radius:4px;border-bottom:1px solid #4b4b4b;"></div>
<span class="t" style="left:1024.0px;top:550.95px;font-size:14px;line-height:20px;color:#c8c8c8;transform:scaleX(0.9794);-webkit-text-stroke:0.2px #c8c8c8;">Search to add sub-action...</span>
<svg class="i" style="left:1451px;top:554.4px;" width="11.6" height="11.6" viewBox="0 0 11.6 11.6" fill="none" stroke="#f0f0f0" stroke-width="1.2" stroke-linecap="round" stroke-linejoin="round"><circle cx="4.4" cy="4.4" r="3.6"/><path d="M7.1 7.1 L10.8 10.8"/></svg>
<div class="b" style="left:922px;top:583px;width:553.4px;height:311px;border-radius:4.5px;border:1px solid #f4f4f4;"></div>
<svg class="i" style="left:936.6999999999999px;top:596.0999999999999px;" width="4.4" height="7.4" viewBox="0 0 4.4 7.4" fill="none" stroke="#a8a8a8" stroke-width="1.1" stroke-linecap="round" stroke-linejoin="round"><path d="M0.4 0.4 L4.0 3.7 L0.4 7.0"/></svg>
<svg class="i" style="left:960px;top:593.4px;" width="15" height="12.6" viewBox="0 0 15 12.6" fill="none" stroke="#d0d0d0" stroke-width="1.4" stroke-linecap="round" stroke-linejoin="round"><rect x="0.7" y="2.7" width="13.6" height="9.1" rx="1.3"/><path d="M0.7 4 V1.9 A1.1 1.1 0 0 1 1.8 0.8 H4.9 A1.1 1.1 0 0 1 6 1.9 V2.7"/></svg>
<span class="t" style="left:982.2px;top:590.5px;font-size:13px;line-height:20px;color:#fff;font-weight:700;transform:scaleX(0.9868);-webkit-text-stroke:0.35px #fff;">Configurable Options</span>
<span class="t" style="left:1118.6px;top:590.5px;font-size:13px;line-height:20px;color:#fff;transform:scaleX(0.9641);-webkit-text-stroke:0.2px #fff;">(2)</span>
<svg class="i" style="left:936.6999999999999px;top:625.0999999999999px;" width="4.4" height="7.4" viewBox="0 0 4.4 7.4" fill="none" stroke="#a8a8a8" stroke-width="1.1" stroke-linecap="round" stroke-linejoin="round"><path d="M0.4 0.4 L4.0 3.7 L0.4 7.0"/></svg>
<svg class="i" style="left:960px;top:622.2px;" width="15" height="12.6" viewBox="0 0 15 12.6" fill="none" stroke="#f40000" stroke-width="1.4" stroke-linecap="round" stroke-linejoin="round"><rect x="0.7" y="2.7" width="13.6" height="9.1" rx="1.3"/><path d="M0.7 4 V1.9 A1.1 1.1 0 0 1 1.8 0.8 H4.9 A1.1 1.1 0 0 1 6 1.9 V2.7"/></svg>
<span class="t" style="left:982.2px;top:619.2px;font-size:13px;line-height:20px;color:#ff0404;font-weight:700;transform:scaleX(0.9728);-webkit-text-stroke:0.35px #ff0404;">No Touchy Code</span>
<span class="t" style="left:1087.4px;top:619.2px;font-size:13px;line-height:20px;color:#ff0404;transform:scaleX(0.9512);-webkit-text-stroke:0.2px #ff0404;">(2)</span>
<svg class="i" style="left:934.8000000000001px;top:655.9px;" width="7.6" height="4.2" viewBox="0 0 7.6 4.2" fill="none" stroke="#c8c8c8" stroke-width="1.1" stroke-linecap="round" stroke-linejoin="round"><path d="M0.4 0.4 L3.8 3.8000000000000003 L7.199999999999999 0.4"/></svg>
<span class="t" style="left:961.6px;top:646.65px;font-size:14px;line-height:20px;color:#fff;-webkit-text-stroke:0.2px #fff;">{</span>
<span class="t" style="left:969.4px;top:646.65px;font-size:14px;line-height:20px;color:#fff;-webkit-text-stroke:0.2px #fff;">}</span>
<span class="t" style="left:982.2px;top:647.5px;font-size:13px;line-height:20px;color:#fff;font-weight:700;transform:scaleX(0.9576);-webkit-text-stroke:0.35px #fff;">if ("%clipSuccess%" Equals "true")</span>
<svg class="i" style="left:954.2px;top:685.5px;" width="7.6" height="4.2" viewBox="0 0 7.6 4.2" fill="none" stroke="#c8c8c8" stroke-width="1.1" stroke-linecap="round" stroke-linejoin="round"><path d="M0.4 0.4 L3.8 3.8000000000000003 L7.199999999999999 0.4"/></svg>
<span class="t" style="left:978.3px;top:677.5px;font-size:13px;line-height:20px;color:#fff;font-weight:700;transform:scaleX(0.9431);-webkit-text-stroke:0.35px #fff;">True Result</span>
<span class="t" style="left:1050.5px;top:677.5px;font-size:13px;line-height:20px;color:#fff;transform:scaleX(0.9512);-webkit-text-stroke:0.2px #fff;">(1)</span>
<div class="b" style="left:961px;top:703.4px;width:512px;height:29.4px;background:#3e3e3e;border-radius:4px;"></div>
<div class="b" style="left:961.4px;top:710px;width:2.8px;height:15.8px;background:#f0202c;border-radius:1.4px;"></div>
<svg class="i" style="left:998.4px;top:711.7px;" width="14.6" height="12" viewBox="0 0 14.6 12" fill="none" stroke="#f4f4f4" stroke-width="1.4" stroke-linecap="round" stroke-linejoin="round"><rect x="0.6" y="0.6" width="13.4" height="10.8" rx="1.6"/><path d="M5.8 4.4 H11 M3.4 7.4 H11"/><circle cx="3.6" cy="4.4" r="0.7" fill="#fff" stroke="none"/></svg>
<span class="t" style="left:1019.6px;top:707.9px;font-size:13px;line-height:20px;color:#f2f2f2;transform:scaleX(0.9758);-webkit-text-stroke:0.2px #f2f2f2;">Twitch Message (%clipCreator% just created a new %clipDu...)</span>
<span class="t" style="left:978.3px;top:738.0px;font-size:13px;line-height:20px;color:#fff;font-weight:700;transform:scaleX(0.9139);-webkit-text-stroke:0.35px #fff;">False Result</span>
<span class="t" style="left:1054.3px;top:738.0px;font-size:13px;line-height:20px;color:#fff;transform:scaleX(0.9512);-webkit-text-stroke:0.2px #fff;">(0)</span>
<div class="b" style="left:450px;top:298px;width:600px;height:284px;background:#2b1c1c;border-radius:8px;border:1px solid #4c4545;box-shadow:0 20px 56px rgba(0,0,0,0.62),0 2px 21px rgba(0,0,0,0.42);"></div>
<svg class="i" style="left:467px;top:307px;" width="16" height="16" viewBox="0 0 16 16" fill="none" stroke="#fff" stroke-width="1.5" stroke-linecap="round" stroke-linejoin="round"><path d="M8 1.5 L12.4 5.8 L8 10.1 L3.6 5.8 Z" stroke="#9d4fdc" stroke-width="1.55"/><path d="M8 5.8 L12.4 10 L8 14.3 L3.6 10 Z" stroke="#0ad0ee" stroke-width="1.55"/><path d="M3.6 5.8 L8 10.1" stroke="#9d4fdc" stroke-width="1.55"/></svg>
<span class="t" style="left:499.1px;top:304.04px;font-size:12px;line-height:20px;color:#fff;transform:scaleX(0.9837);-webkit-text-stroke:0.2px #fff;">Edit SubAction - Send Message to Channel</span>
<svg class="i" style="left:978px;top:307.4px;" width="10" height="13" viewBox="0 0 10 13" fill="none" stroke="#f0f0f0" stroke-width="1.1" stroke-linecap="round" stroke-linejoin="round"><path d="M1.4 3.6 C1.4 1.6 2.8 0.8 4.6 0.8 C6.4 0.8 7.8 1.8 7.8 3.6 C7.8 6 4.6 6.2 4.6 9"/><circle cx="4.6" cy="11.8" r="0.75" fill="#fff" stroke="none"/></svg>
<svg class="i" style="left:1021px;top:309px;" width="11" height="11" viewBox="0 0 11 11" fill="none" stroke="#fff" stroke-width="1.1" stroke-linecap="round" stroke-linejoin="round"><path d="M0.4 0.4 L10.6 10.6 M10.6 0.4 L0.4 10.6"/></svg>
<span class="t" style="left:465.54px;top:339.75px;font-size:14px;line-height:20px;color:#fff;transform:scaleX(0.955);-webkit-text-stroke:0.2px #fff;">Message</span>
<span class="t" style="left:991.4px;top:340.15px;font-size:14px;line-height:20px;color:#fff;transform:scaleX(0.9899);-webkit-text-stroke:0.2px #fff;">79/500</span>
<div class="b" style="left:466px;top:363px;width:568px;height:136px;background:#382929;border-radius:4px;border-bottom:1px solid #493b3b;"></div>
<div class="b" style="left:460.3px;top:358px;width:576.3px;height:53px;border:4.5px solid #e81c1c;"></div>
<span class="t" style="left:478.8px;top:373.15px;font-size:14px;line-height:20px;color:#fff;transform:scaleX(0.9873);-webkit-text-stroke:0.2px #fff;">%clipCreator% just created a new %clipDuration% second clip called %clipTitle%!</span>
<div class="b" style="left:466px;top:504px;width:40.2px;height:20.2px;background:#f3212e;border-radius:10.1px;"></div>
<div class="b" style="left:488.90000000000003px;top:508px;width:12.4px;height:12.4px;background:#000;border-radius:6.2px;"></div>
<div class="b" style="left:670.1px;top:504px;width:40.2px;height:20.2px;background:#f3212e;border-radius:10.1px;"></div>
<div class="b" style="left:692.8px;top:508px;width:12.4px;height:12.4px;background:#000;border-radius:6.2px;"></div>
<span class="t" style="left:514.3px;top:504.25px;font-size:14px;line-height:20px;color:#fff;transform:scaleX(0.9943);-webkit-text-stroke:0.2px #fff;">Send using bot account</span>
<span class="t" style="left:717.63px;top:504.25px;font-size:14px;line-height:20px;color:#fff;transform:scaleX(0.9672);-webkit-text-stroke:0.2px #fff;">Fallback to Broadcaster</span>
<div class="b" style="left:841px;top:534px;width:90px;height:32px;background:#382929;"></div>
<div class="b" style="left:836.9px;top:530.2px;width:98.6px;height:38.4px;border:4.5px solid #e81c1c;"></div>
<span class="t" style="left:877.0px;top:540.25px;font-size:14px;line-height:20px;color:#fff;transform:scaleX(0.9264);-webkit-text-stroke:0.2px #fff;">Ok</span>
<div class="b" style="left:939px;top:534px;width:95.3px;height:32px;background:#372828;border-radius:4px;border:1px solid #3f3030;"></div>
<span class="t" style="left:966.0px;top:540.15px;font-size:14px;line-height:20px;color:#fff;transform:scaleX(0.934);-webkit-text-stroke:0.2px #fff;">Cancel</span>
</div>
</body></html>
